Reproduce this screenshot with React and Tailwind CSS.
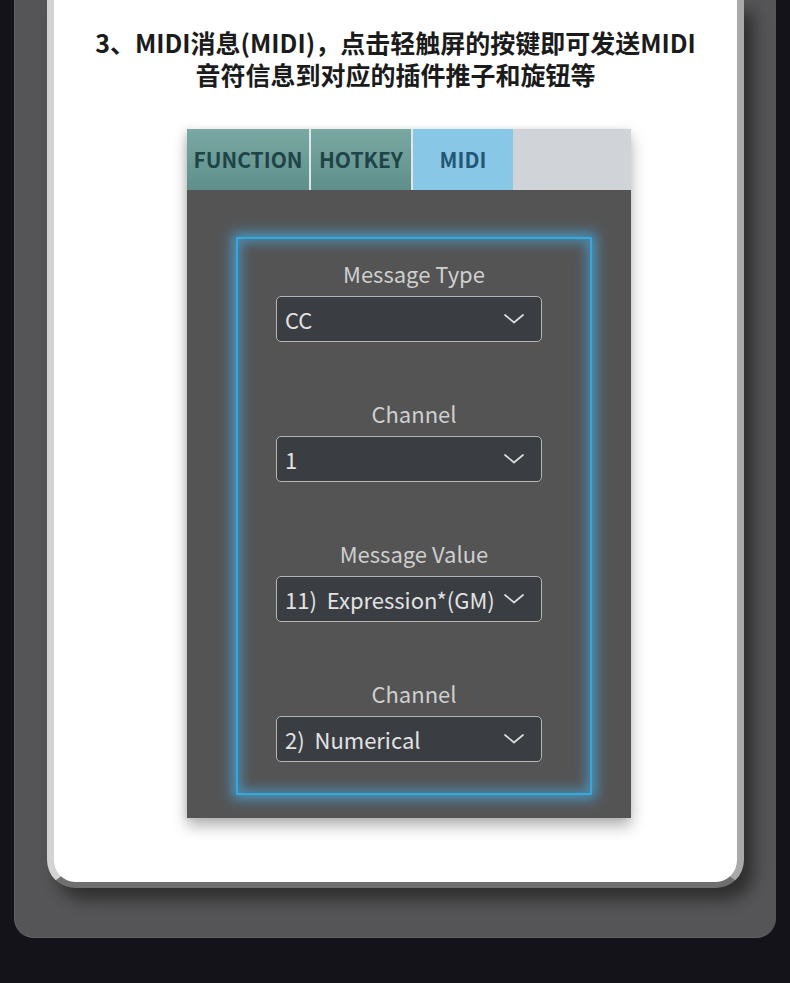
const font = { fontFamily: '"Noto Sans CJK SC", "Noto Sans", sans-serif' }

const fields = [
  { label: 'Message Type', value: 'CC' },
  { label: 'Channel', value: '1' },
  { label: 'Message Value', value: '11)  Expression*(GM)' },
  { label: 'Channel', value: '2)  Numerical' },
]

function Chevron() {
  return (
    <svg width="22" height="12" viewBox="0 0 22 12" fill="none" className="shrink-0">
      <path d="M2 2 L11 9.5 L20 2" stroke="#dcdcdc" strokeWidth="1.7" strokeLinecap="round" strokeLinejoin="round" />
    </svg>
  )
}

function SelectBox({ value }) {
  return (
    <div className="ml-[38px] w-[266px] h-[46px] flex items-center justify-between pl-[8px] pr-[16px] bg-[#3a3e43] border border-[#b4b4b4] rounded-[5px]">
      <span className="text-[22px] leading-none text-[#e2e2e2] whitespace-pre">{value}</span>
      <Chevron />
    </div>
  )
}

export default function App() {
  return (
    <div className="w-[790px] h-[983px] bg-[#14131a] overflow-hidden" style={font}>
      {/* grey outer panel */}
      <div className="ml-[14px] w-[762px] h-[938px] bg-[#555557] rounded-b-[20px] border-l border-b border-[#626264]">
        {/* white card */}
        <div className="ml-[32px] w-[697px] h-[888px] bg-white rounded-b-[28px] border-l-[7px] border-l-[#d3d3d3] border-r-[7px] border-r-[#a9a9a9] border-b-[6px] border-b-[#6f6f6f] shadow-[10px_12px_16px_rgba(0,0,0,0.45)]">
          <div className="pt-[26px] text-center text-[25px] leading-[32px] font-bold text-[#1b1b1b] whitespace-nowrap">
            <div>3、MIDI消息(MIDI)，点击轻触屏的按键即可发送MIDI</div>
            <div>音符信息到对应的插件推子和旋钮等</div>
          </div>

          {/* screenshot frame */}
          <div className="mt-[39px] ml-[133px] w-[444px] shadow-[0_8px_14px_rgba(0,0,0,0.3),-2px_0_6px_rgba(0,0,0,0.08)]">
            <div className="flex h-[61px]">
              <div className="w-[122px] flex items-center justify-center bg-gradient-to-b from-[#7aa9a4] to-[#5f8f8b] text-[21px] font-semibold text-[#1e4447]">
                FUNCTION
              </div>
              <div className="w-[2px] bg-[#e4e6e6]" />
              <div className="w-[100px] flex items-center justify-center bg-gradient-to-b from-[#7aa9a4] to-[#5f8f8b] text-[21px] font-semibold text-[#1e4447]">
                HOTKEY
              </div>
              <div className="w-[2px] bg-[#e4e6e6]" />
              <div className="w-[100px] flex items-center justify-center bg-[#88c8e6] text-[21px] font-semibold text-[#245677]">
                MIDI
              </div>
              <div className="flex-1 bg-[#d0d3d7]" />
            </div>

            <div className="h-[628px] bg-[#545454] pt-[47px] pl-[49px]">
              <div className="w-[356px] h-[558px] border-2 border-[#33a8dd] shadow-[0_0_12px_4px_rgba(70,175,235,0.75),inset_0_0_12px_4px_rgba(70,175,235,0.55)] pt-[20px] flex flex-col gap-[57px]">
                {fields.map((f, i) => (
                  <div key={i} className="flex flex-col">
                    <div className="h-[28px] text-center text-[22px] leading-[28px] text-[#cfcfcf]">{f.label}</div>
                    <div className="mt-[9px]">
                      <SelectBox value={f.value} />
                    </div>
                  </div>
                ))}
              </div>
            </div>
          </div>
        </div>
      </div>
    </div>
  )
}
